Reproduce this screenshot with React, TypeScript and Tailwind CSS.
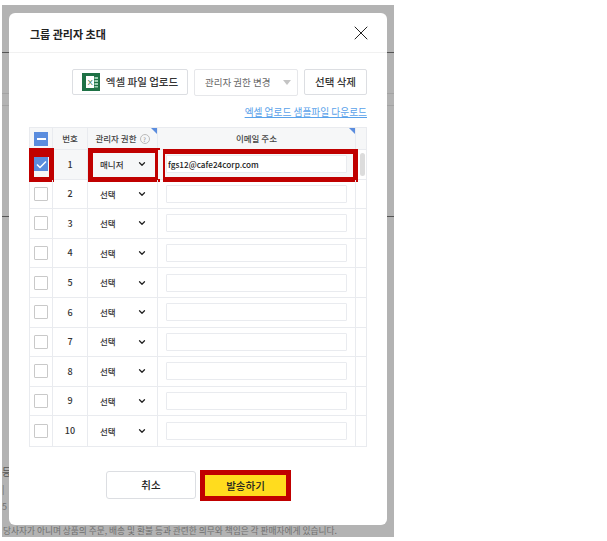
import React from 'react';
import { ChevronDown, X } from 'lucide-react';

const rows = [1, 2, 3, 4, 5, 6, 7, 8, 9, 10];

const ExcelIcon = () => (
  <svg width="18" height="18" viewBox="0 0 18 18" className="shrink-0">
    <rect x="0" y="0" width="18" height="18" fill="#1e7145" />
    <rect x="4" y="3" width="8" height="12" fill="#ffffff" />
    <text x="5.5" y="12" fontSize="8" fontFamily="Liberation Sans" fill="#1e7145">X</text>
    <rect x="12.5" y="4" width="3.5" height="2" fill="#9fd0b4" />
    <rect x="12.5" y="7" width="3.5" height="2" fill="#9fd0b4" />
    <rect x="12.5" y="10" width="3.5" height="2" fill="#9fd0b4" />
    <rect x="12.5" y="13" width="3.5" height="1.5" fill="#9fd0b4" />
  </svg>
);

const HeaderCheck = () => (
  <span className="w-[14px] h-[14px] bg-[#5b8dde] flex items-center justify-center">
    <span className="w-[9px] h-[2px] bg-white" />
  </span>
);

const RowCheck = ({ checked }: { checked: boolean }) =>
  checked ? (
    <span className="w-[14px] h-[14px] bg-[#5b8dde] flex items-center justify-center">
      <svg width="11" height="9" viewBox="0 0 11 9" fill="none">
        <path d="M1 4.5 L4 7.5 L10 1.5" stroke="#fff" strokeWidth="1.5" />
      </svg>
    </span>
  ) : (
    <span className="w-[14px] h-[14px] bg-white border border-[#c9c9c9] rounded-[1px]" />
  );

const RedBox = ({ className }: { className: string }) => (
  <span className={`absolute border-[#c00000] pointer-events-none ${className}`} />
);

export default function App() {
  return (
    <div className="w-[607px] h-[541px] bg-white font-['Noto_Sans_CJK_KR','Noto_Sans',sans-serif] pt-[5px] pl-[2px] overflow-hidden">
      <div className="relative w-[392px] h-[532px] bg-[#b3b3b3] overflow-hidden">
        {/* page behind the dimmed layer */}
        <div className="h-[48px] border-b border-[#555555]" />
        <div className="h-[41px] border-b border-[#a3a3a3]" />
        <div className="h-[12px] border-b border-[#a3a3a3]" />
        <div className="h-[111px] border-b border-[#555555]" />
        <div className="absolute left-0 top-[461px] text-[10px] leading-[12px] text-[#555555]">등:</div>
        <div className="absolute left-0 top-[479px] text-[9px] leading-[12px] text-[#6e6e6e]">|</div>
        <div className="absolute left-0 top-[496px] text-[9px] leading-[12px] text-[#6e6e6e]">5</div>
        <div className="absolute left-[1px] bottom-0 text-[8.7px] leading-[12px] text-[#6e6e6e] whitespace-nowrap">
          당사자가 아니며 상품의 주문, 배송 및 환불 등과 관련한 의무와 책임은 각 판매자에게 있습니다.
        </div>

        {/* modal */}
        <div className="absolute left-[7px] top-[8px] w-[378px] h-[512px] bg-white rounded-[6px] flex flex-col">
          <div className="h-[40px] shrink-0 border-b border-[#f1f1f1] pl-[21px] pr-[14px] flex items-center justify-between">
            <h2 className="text-[11px] font-bold text-[#222] leading-none mt-[3px]">그룹 관리자 초대</h2>
            <X size={24} strokeWidth={1} className="text-[#222] mt-[1px]" />
          </div>

          <div className="px-[20px] pt-[16px] flex flex-col">
            <div className="flex justify-end gap-[6px]">
              <button className="w-[116px] h-[26px] border border-[#dcdee2] rounded-[2px] flex items-center justify-center gap-[6px] text-[10.5px] font-medium text-[#333]">
                <ExcelIcon />
                엑셀 파일 업로드
              </button>
              <div className="w-[104px] h-[27px] border border-[#e6e7ea] rounded-[2px] flex items-center pl-[10px] pr-[6px] justify-between text-[9.5px] text-[#666]">
                관리자 권한 변경
                <span className="w-0 h-0 border-x-[4px] border-x-transparent border-t-[5px] border-t-[#c4c4c4]" />
              </div>
              <button className="w-[63px] h-[26px] border border-[#dcdee2] rounded-[2px] flex items-center justify-center text-[10.5px] font-medium text-[#333]">
                선택 삭제
              </button>
            </div>

            <a className="self-end mt-[9px] text-[9.7px] leading-[14px] text-[#5aa2ea] underline">
              엑셀 업로드 샘플파일 다운로드
            </a>

            <div className="mt-[8px] w-[338px] border border-[#e9ebef]">
              {/* header */}
              <div className="flex h-[22px] bg-[#f6f7f8] border-b border-[#e9ebef] text-[8.5px] text-[#444] font-medium">
                <div className="w-[23px] border-r border-[#e9ebef] flex items-center justify-center">
                  <HeaderCheck />
                </div>
                <div className="w-[35px] border-r border-[#e9ebef] flex items-center justify-center">번호</div>
                <div className="relative w-[70px] border-r border-[#e9ebef] flex items-center justify-center gap-[3px]">
                  관리자 권한
                  <span className="w-[10px] h-[10px] rounded-full border border-[#bbbbbb] text-[6px] leading-[9px] text-center text-[#999]">?</span>
                  <span className="absolute top-0 right-0 w-0 h-0 border-l-[6px] border-l-transparent border-t-[6px] border-t-[#5b8dde]" />
                </div>
                <div className="relative w-[198px] border-r border-[#e9ebef] flex items-center justify-center">
                  이메일 주소
                  <span className="absolute top-0 right-0 w-0 h-0 border-l-[6px] border-l-transparent border-t-[6px] border-t-[#5b8dde]" />
                </div>
                <div className="flex-1" />
              </div>

              {/* rows */}
              {rows.map((n) => {
                const first = n === 1;
                return (
                  <div key={n} className={`flex h-[29.6px] text-[8.5px] font-medium text-[#333] ${n < 10 ? 'border-b border-[#e9ebef]' : ''}`}>
                    <div className={`relative w-[23px] border-r border-[#e9ebef] flex items-center justify-center ${first ? 'bg-[#f6f7f8]' : ''}`}>
                      <RowCheck checked={first} />
                      {first && <RedBox className="-left-[1px] -top-[2px] w-[25px] h-[34px] border-x-[5px] border-b-[5px] border-t-[9px]" />}
                    </div>
                    <div className={`w-[35px] border-r border-[#e9ebef] flex items-center justify-center text-[9px] ${first ? 'bg-[#f6f7f8]' : ''}`}>{n}</div>
                    <div className={`relative w-[70px] border-r border-[#e9ebef] flex items-center pl-[12px] pr-[10px] justify-between ${first ? 'bg-[#f6f7f8]' : ''}`}>
                      <span>{first ? '매니저' : '선택'}</span>
                      <ChevronDown size={10} strokeWidth={3} className="text-[#222]" />
                      {first && <RedBox className="left-0 -top-[2px] w-[72px] h-[34px] border-[5px] bg-transparent" />}
                    </div>
                    <div className={`relative w-[198px] border-r border-[#e9ebef] flex items-center pl-[8px] pr-[8px] ${first ? 'bg-[#f6f7f8]' : ''}`}>
                      <div className="w-[181px] h-[18px] border border-[#e9ebef] rounded-[1px] bg-white flex items-center pl-[1px] text-[8.2px] text-[#222]">
                        {first ? 'fgs12@cafe24corp.com' : ''}
                      </div>
                      {first && <RedBox className="left-[5px] -top-[1px] w-[195px] h-[33px] border-l-[2px] border-y-[5px] border-r-[5px]" />}
                    </div>
                    <div className="relative flex-1">
                      {first && <span className="absolute left-[4px] top-[3px] w-[5px] h-[23px] rounded-full bg-[#dcdcdc]" />}
                    </div>
                  </div>
                );
              })}
            </div>

            {/* footer */}
            <div className="mt-[23px] flex justify-center gap-[4px] pl-[1px]">
              <button className="w-[90px] h-[28px] mt-[1px] border border-[#dcdee2] rounded-[3px] text-[10.5px] font-medium text-[#222]">
                취소
              </button>
              <button className="w-[91px] h-[31px] border-[5px] border-[#c00000] bg-[#ffdc1e] text-[10.5px] font-medium text-[#222]">
                발송하기
              </button>
            </div>
          </div>
        </div>
      </div>
    </div>
  );
}
